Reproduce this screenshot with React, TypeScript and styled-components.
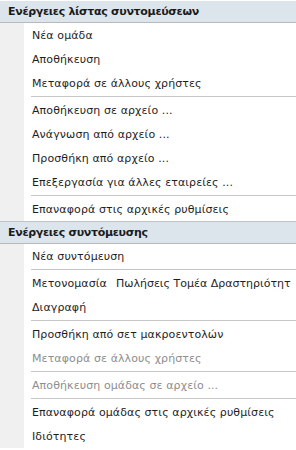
import React from "react";
import styled, { createGlobalStyle } from "styled-components";

const Global = createGlobalStyle`
  html, body { margin: 0; padding: 0; background: #ffffff; }
  body { font-family: "DejaVu Sans", "Noto Sans", sans-serif; }
`;

const Panel = styled.div`
  width: 296px;
  height: 450px;
  overflow: hidden;
  background: #ffffff;
  display: flex;
  flex-direction: column;
  padding-top: 1px;
  box-sizing: border-box;
`;

const Header = styled.div<{ $top?: boolean }>`
  height: 21px;
  background: #dde5ec;
  border-top: ${(p) => (p.$top ? "1px solid #c2c2c2" : "none")};
  border-bottom: 1px solid #b9b9b9;
  display: flex;
  align-items: center;
  padding-left: 8px;
  font-size: 11px;
  font-weight: 700;
  color: #1a1a1a;
  letter-spacing: -0.3px;
`;

const Section = styled.div`
  display: flex;
  flex-direction: column;
  background: linear-gradient(to right, #f0f0f0 0, #f0f0f0 24px, #ffffff 24px);
`;

const Item = styled.div<{ $disabled?: boolean }>`
  height: 24px;
  display: flex;
  align-items: center;
  padding-left: 32px;
  font-size: 11px;
  letter-spacing: 0.1px;
  color: ${(p) => (p.$disabled ? "#8d8d8d" : "#1e1e1e")};
  white-space: nowrap;
  overflow: hidden;
`;

const Field = styled.span`
  margin-left: 9px;
  flex: 1;
  overflow: hidden;
  white-space: nowrap;
  letter-spacing: 0;
  color: #1e1e1e;
`;

const Separator = styled.div`
  height: 1px;
  margin: 1px 0 1px 31px;
  background: #c6c6c6;
`;

export default function App() {
  return (
    <>
      <Global />
      <Panel>
        <Header>Ενέργειες λίστας συντομεύσεων</Header>
        <Section>
          <Item>Νέα ομάδα</Item>
          <Item>Αποθήκευση</Item>
          <Item>Μεταφορά σε άλλους χρήστες</Item>
          <Separator />
          <Item>Αποθήκευση σε αρχείο ...</Item>
          <Item>Ανάγνωση από αρχείο ...</Item>
          <Item>Προσθήκη από αρχείο ...</Item>
          <Item>Επεξεργασία για άλλες εταιρείες ...</Item>
          <Separator />
          <Item>Επαναφορά στις αρχικές ρυθμίσεις</Item>
        </Section>
        <Header $top>Ενέργειες συντόμευσης</Header>
        <Section>
          <Item>Νέα συντόμευση</Item>
          <Separator />
          <Item>
            Μετονομασία<Field>Πωλήσεις Τομέα Δραστηριότητ</Field>
          </Item>
          <Item>Διαγραφή</Item>
          <Separator />
          <Item>Προσθήκη από σετ μακροεντολών</Item>
          <Item $disabled>Μεταφορά σε άλλους χρήστες</Item>
          <Separator />
          <Item $disabled>Αποθήκευση ομάδας σε αρχείο ...</Item>
          <Separator />
          <Item>Επαναφορά ομάδας στις αρχικές ρυθμίσεις</Item>
          <Item>Ιδιότητες</Item>
        </Section>
      </Panel>
    </>
  );
}
